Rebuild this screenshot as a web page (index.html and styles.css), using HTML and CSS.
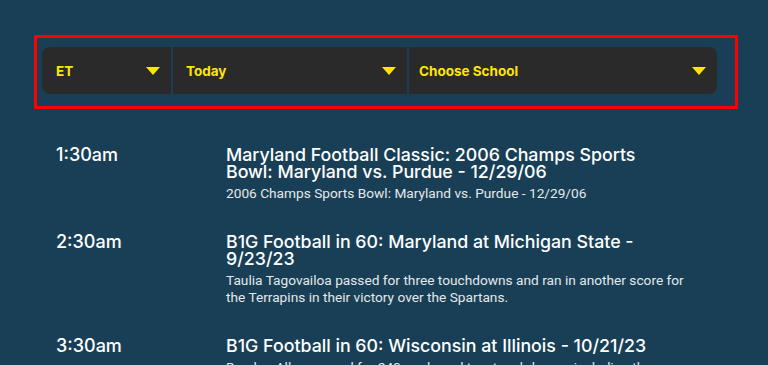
FILE: index.html
```html
<!DOCTYPE html>
<html lang="en">
<head>
    <meta charset="UTF-8">
    <meta name="viewport" content="width=device-width, initial-scale=1.0">
    <title>TV Schedule</title>
    <link rel="stylesheet" href="styles.css">
</head>
<body>
    <div class="schedule">
        <div class="filter-box">
            <div class="filters">
                <div class="filter filter-zone">
                    <span>ET</span>
                    <svg class="caret" viewBox="0 0 14 8"><path d="M0 0h14L7 8z"/></svg>
                </div>
                <div class="filter filter-day">
                    <span>Today</span>
                    <svg class="caret" viewBox="0 0 14 8"><path d="M0 0h14L7 8z"/></svg>
                </div>
                <div class="filter filter-school">
                    <span>Choose School</span>
                    <svg class="caret" viewBox="0 0 14 8"><path d="M0 0h14L7 8z"/></svg>
                </div>
            </div>
        </div>

        <ul class="listings">
            <li class="listing">
                <div class="time">1:30am</div>
                <div class="show">
                    <h3 class="show-title">Maryland Football Classic: 2006 Champs Sports Bowl: Maryland vs. Purdue - 12/29/06</h3>
                    <p class="show-desc">2006 Champs Sports Bowl: Maryland vs. Purdue - 12/29/06</p>
                </div>
            </li>
            <li class="listing">
                <div class="time">2:30am</div>
                <div class="show">
                    <h3 class="show-title">B1G Football in 60: Maryland at Michigan State - 9/23/23</h3>
                    <p class="show-desc">Taulia Tagovailoa passed for three touchdowns and ran in another score for the Terrapins in their victory over the Spartans.</p>
                </div>
            </li>
            <li class="listing">
                <div class="time">3:30am</div>
                <div class="show">
                    <h3 class="show-title">B1G Football in 60: Wisconsin at Illinois - 10/21/23</h3>
                    <p class="show-desc">Braelon Allen passed for 240 yards and two touchdowns, including the game-winning score late in the fourth quarter.</p>
                </div>
            </li>
        </ul>
    </div>
</body>
</html>
```

FILE: styles.css
```css
body {
    margin: 0;
    background-color: #193f56;
    font-family: "Roboto", "Liberation Sans", sans-serif;
    overflow: hidden;
}
.schedule {
    padding-top: 35px;
}
.filter-box {
    margin: 0 30px 0 34px;
    border: 3px solid #ff0000;
    padding: 9px 18px 12px 5px;
}
.filters {
    display: flex;
    gap: 2px;
    height: 47px;
}
.filter {
    display: flex;
    align-items: center;
    justify-content: space-between;
    background-color: #2a2a2a;
    padding: 0 11px 0 14px;
    color: #ffe600;
    font-family: "Inter", "Liberation Sans", sans-serif;
    font-weight: 700;
    font-size: 13.5px;
}
.filter-zone {
    width: 129px;
    box-sizing: border-box;
    border-radius: 8px 0 0 8px;
}
.filter-day {
    width: 234px;
    box-sizing: border-box;
    padding-left: 13px;
}
.filter-school {
    flex: 1;
    border-radius: 0 8px 8px 0;
    padding-left: 10px;
}
.caret {
    width: 14px;
    height: 8px;
    fill: #ffe600;
}
.listings {
    list-style: none;
    margin: 0;
    padding: 0 0 0 56px;
}
.listing {
    display: flex;
    margin-top: 30px;
}
.listing:first-child {
    margin-top: 37px;
}
.time {
    width: 170px;
    flex-shrink: 0;
    color: #ffffff;
    font-family: "Inter", "Liberation Sans", sans-serif;
    font-weight: 500;
    font-size: 18px;
    line-height: 17px;
}
.show {
    width: 462px;
}
.show-title {
    max-width: 450px;
    margin: 0;
    color: #ffffff;
    font-family: "Inter", "Liberation Sans", sans-serif;
    font-weight: 500;
    font-size: 17.8px;
    line-height: 17px;
}
.show-desc {
    margin: 5px 0 0;
    color: #e4e8ea;
    font-size: 13.7px;
    line-height: 17.5px;
}
```
